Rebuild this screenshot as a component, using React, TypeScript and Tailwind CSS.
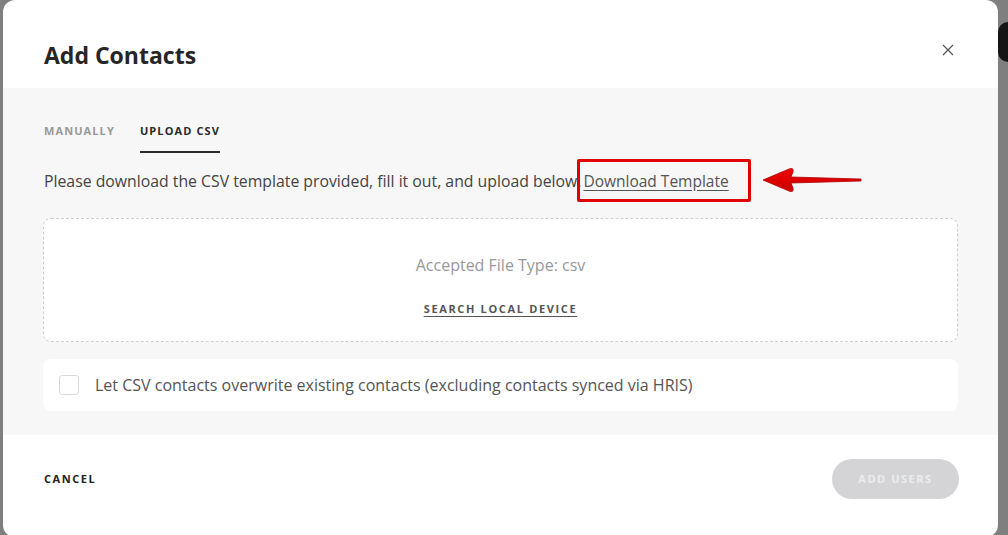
import React from 'react'

const font = { fontFamily: '"Open Sans", "Liberation Sans", sans-serif' }

const Arrow: React.FC = () => (
  <svg width="104" height="30" viewBox="0 0 104 30" className="shrink-0">
    <defs>
      <linearGradient id="ag" x1="0" y1="0" x2="0" y2="1">
        <stop offset="0" stopColor="#f20000" />
        <stop offset="1" stopColor="#c80000" />
      </linearGradient>
    </defs>
    <path
      d="M2 15 L28 4 Q33 2 32 7 L30 12 L100 14 L100 16 L30 18 L32 23 Q33 28 28 26 Z"
      fill="url(#ag)"
      stroke="#b00000"
      strokeWidth="0.8"
      strokeLinejoin="round"
    />
  </svg>
)

export default function App() {
  return (
    <div className="relative h-[535px] w-[1008px] overflow-hidden bg-[#7f7f7f]" style={font}>
      <div className="absolute right-0 top-[22px] h-[40px] w-[10px] rounded-l-full bg-[#151515]" />
      <div className="absolute left-[3px] top-0 flex h-[537px] w-[995px] flex-col overflow-hidden rounded-[12px] bg-white">
        <div className="flex h-[88px] shrink-0 items-center justify-between pl-[41px] pr-[44px] pt-[22px]">
          <h1 className="text-[23px] font-bold text-[#262626]">Add Contacts</h1>
          <button type="button" className="-mt-[10px] text-[#555]">
            <svg width="12" height="12" viewBox="0 0 12 12">
              <path d="M1 1 L11 11 M11 1 L1 11" stroke="#555" strokeWidth="1.2" />
            </svg>
          </button>
        </div>

        <div className="flex h-[347px] shrink-0 flex-col bg-[#f7f7f7] px-[40px] pt-[35px]">
          <div className="flex items-start gap-[25px] pl-[1px]">
            <button type="button" className="pb-[11px] text-[11px] font-bold tracking-[0.1em] text-[#999]">
              MANUALLY
            </button>
            <button
              type="button"
              className="border-b-2 border-[#2a2a2a] pb-[11px] text-[11px] font-bold tracking-[0.1em] text-[#2a2a2a]"
            >
              UPLOAD CSV
            </button>
          </div>

          <div className="mt-[6px] flex items-center pl-[1px]">
            <p className="pt-[3px] text-[15.8px] text-[#444]">
              Please download the CSV template provided, fill it out, and upload below.
            </p>
            <div className="-ml-[4px] flex h-[43px] items-center rounded-[2px] border-[3px] border-[#e00000] pl-[3px] pr-[19px] pt-[3px]">
              <a href="#" className="text-[15.5px] text-[#555] underline underline-offset-[3px]">
                Download Template
              </a>
            </div>
            <div className="ml-[10px]">
              <Arrow />
            </div>
          </div>

          <div className="mt-[16px] flex h-[124px] flex-col items-center justify-center rounded-[8px] border border-dashed border-[#cfcfcf] bg-white pt-[12px]">
            <div className="text-[16px] text-[#999]">Accepted File Type: csv</div>
            <button
              type="button"
              className="mt-[24px] text-[11px] font-bold tracking-[0.15em] text-[#555] underline underline-offset-[3px]"
            >
              SEARCH LOCAL DEVICE
            </button>
          </div>

          <label className="mt-[17px] flex h-[52px] items-center gap-[16px] rounded-[8px] bg-white px-[16px]">
            <span className="h-[20px] w-[20px] rounded-[3px] border border-[#dadada] bg-white" />
            <span className="text-[16px] text-[#555]">
              Let CSV contacts overwrite existing contacts (excluding contacts synced via HRIS)
            </span>
          </label>
        </div>

        <div className="flex flex-1 items-center justify-between pl-[41px] pr-[39px] pb-[14px]">
          <button type="button" className="text-[11px] font-bold tracking-[0.14em] text-[#222]">
            CANCEL
          </button>
          <button
            type="button"
            className="h-[40px] w-[127px] rounded-full bg-[#d4d4d6] text-[11px] font-bold tracking-[0.14em] text-[#ececec]"
          >
            ADD USERS
          </button>
        </div>
      </div>
    </div>
  )
}
